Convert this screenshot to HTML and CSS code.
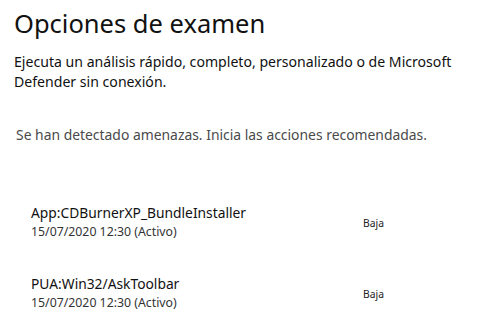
FILE: index.html
```html
<!DOCTYPE html>
<html lang="es">
<head>
<meta charset="utf-8">
<link rel="stylesheet" href="styles.css">
</head>
<body>
<main class="page">
  <h1 class="title">Opciones de examen</h1>
  <p class="desc">Ejecuta un análisis rápido, completo, personalizado o de Microsoft Defender sin conexión.</p>
  <p class="alert">Se han detectado amenazas. Inicia las acciones recomendadas.</p>
  <ul class="threats">
    <li class="threat">
      <div class="info">
        <div class="name">App:CDBurnerXP_BundleInstaller</div>
        <div class="date">15/07/2020 12:30 (Activo)</div>
      </div>
      <div class="level">Baja</div>
    </li>
    <li class="threat">
      <div class="info">
        <div class="name">PUA:Win32/AskToolbar</div>
        <div class="date">15/07/2020 12:30 (Activo)</div>
      </div>
      <div class="level">Baja</div>
    </li>
  </ul>
</main>
</body>
</html>
```
FILE: styles.css
```css
html, body {
  margin: 0;
  padding: 0;
  background: #ffffff;
}
body {
  font-family: "Noto Sans", "Open Sans", sans-serif;
  color: #000000;
}
.page {
  padding: 4px 0 0 14px;
}
.title {
  margin: 0;
  font-size: 25.5px;
  font-weight: 400;
  line-height: 38px;
  color: #111111;
}
.desc {
  margin: 10px 0 0 0;
  font-size: 14.1px;
  line-height: 20px;
  width: 455px;
  color: #111111;
}
.alert {
  margin: 33px 0 0 2px;
  font-size: 13.9px;
  line-height: 20px;
  color: #4a4a4a;
}
.threats {
  list-style: none;
  margin: 0;
  padding: 0 0 0 17px;
}
.threat {
  display: flex;
  align-items: center;
  height: 71px;
}
.threat:first-child {
  margin-top: 42px;
}
.info {
  width: 332px;
}
.name {
  font-size: 13.8px;
  line-height: 18px;
  color: #111111;
}
.date {
  font-size: 12.3px;
  line-height: 20px;
  color: #333333;
}
.level {
  font-size: 10.3px;
  color: #222222;
}
```
